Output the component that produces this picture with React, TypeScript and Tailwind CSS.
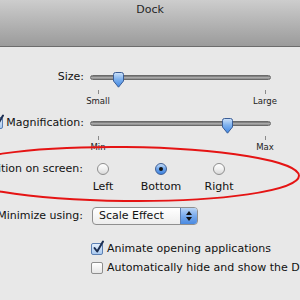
import React from "react";

function Thumb() {
  return (
    <svg width="13" height="16" viewBox="0 0 13 16" className="block">
      <defs>
        <linearGradient id="tg" x1="0" y1="0" x2="0" y2="1">
          <stop offset="0" stopColor="#cfe3fa" />
          <stop offset="0.45" stopColor="#7fb2ee" />
          <stop offset="1" stopColor="#3f86e3" />
        </linearGradient>
      </defs>
      <path d="M1.5 2.5 Q1.5 0.5 3.5 0.5 H9.5 Q11.5 0.5 11.5 2.5 V9 L6.5 15.2 L1.5 9 Z" fill="url(#tg)" stroke="#3b5d96" strokeWidth="1" />
    </svg>
  );
}

function Slider({ thumbLeft }: { thumbLeft: number }) {
  return (
    <div className="relative h-[16px] w-[181px]">
      <div className="absolute left-0 right-0 top-[6px] h-[5px] rounded-full bg-gradient-to-b from-[#6f6f6f] via-[#a9a9a9] to-[#8a8a8a] border border-[#6a6a6a]" />
      <div className="absolute top-[3px]" style={{ left: thumbLeft }}>
        <Thumb />
      </div>
    </div>
  );
}

function Ticks({ a, b }: { a: string; b: string }) {
  return (
    <div className="flex justify-between ml-[86px] w-[191px]">
      <div className="flex w-[24px] flex-col items-center">
        <div className="h-[4px] w-px bg-[#8a8a8a]" />
        <div className="mt-[2px] text-[8.5px] leading-[10px] text-[#222]">{a}</div>
      </div>
      <div className="flex w-[24px] flex-col items-center">
        <div className="h-[4px] w-px bg-[#8a8a8a]" />
        <div className="mt-[2px] text-[8.5px] leading-[10px] text-[#222]">{b}</div>
      </div>
    </div>
  );
}

function Radio({ on, label }: { on?: boolean; label: string }) {
  return (
    <div className="flex w-[40px] flex-col items-center">
      {on ? (
        <div className="flex h-[12px] w-[12px] items-center justify-center rounded-full border border-[#3f5f95] bg-gradient-to-b from-[#c4dcf7] via-[#6da4ea] to-[#3d82df]">
          <div className="h-[4px] w-[4px] rounded-full bg-[#111]" />
        </div>
      ) : (
        <div className="h-[12px] w-[12px] rounded-full border border-[#8e8e8e] bg-gradient-to-b from-[#ffffff] via-[#f0f0f0] to-[#d8d8d8]" />
      )}
      <div className="mt-[7px] whitespace-nowrap leading-[10px]">{label}</div>
    </div>
  );
}

function CheckBox({ on }: { on?: boolean }) {
  return (
    <div
      className={
        "relative h-[12px] w-[12px] shrink-0 rounded-[2px] border " +
        (on
          ? "border-[#5b7fb3] bg-gradient-to-b from-[#e4effc] to-[#a9c9ef]"
          : "border-[#8e8e8e] bg-gradient-to-b from-[#ffffff] to-[#e6e6e6]")
      }
    >
      {on && (
        <svg width="13" height="14" viewBox="0 0 13 14" className="absolute left-[0px] top-[-4px]">
          <path d="M2.5 8 L5.2 11.5 L11 1.5" fill="none" stroke="#1d2f52" strokeWidth="2" strokeLinecap="round" strokeLinejoin="round" />
        </svg>
      )}
    </div>
  );
}

export default function App() {
  return (
    <div className="relative h-[300px] w-[300px] overflow-hidden bg-[#e8e8e8] font-['DejaVu_Sans',sans-serif] text-[11px] text-[#111]">
      <div className="flex h-[47px] justify-center border-b border-[#6c6c6c] bg-gradient-to-b from-[#cdcdcd] to-[#9b9b9b] pt-[3px]">
        <span className="leading-[14px] text-[#262626]">Dock</span>
      </div>

      <div className="mt-[22px] flex items-center">
        <div className="flex w-[84px] justify-end whitespace-nowrap">Size:</div>
        <div className="ml-[6px]">
          <Slider thumbLeft={22} />
        </div>
      </div>
      <div className="mt-[4px]">
        <Ticks a="Small" b="Large" />
      </div>

      <div className="mt-[9px] flex items-center">
        <div className="flex w-[84px] items-center justify-end gap-[3px] whitespace-nowrap">
          <CheckBox on />
          <span>Magnification:</span>
        </div>
        <div className="ml-[6px]">
          <Slider thumbLeft={131} />
        </div>
      </div>
      <div className="mt-[5px]">
        <Ticks a="Min" b="Max" />
      </div>

      <div className="mt-[11px] flex items-start">
        <div className="flex h-[12px] w-[83px] items-center justify-end whitespace-nowrap">Position on screen:</div>
        <div className="flex gap-[18px]">
          <Radio label="Left" />
          <Radio on label="Bottom" />
          <Radio label="Right" />
        </div>
      </div>

      <div className="mt-[15px] flex items-center">
        <div className="flex w-[83px] justify-end whitespace-nowrap">Minimize using:</div>
        <div className="ml-[9px] flex h-[18px] w-[106px] overflow-hidden rounded-[4px] border border-[#8f8f8f] bg-gradient-to-b from-[#ffffff] to-[#ededed]">
          <div className="flex flex-1 items-center pl-[6px]">Scale Effect</div>
          <div className="flex w-[17px] flex-col items-center justify-center gap-[2px] border-l border-[#5d7fb2] bg-gradient-to-b from-[#b9d4f5] via-[#78aaec] to-[#4a8ae1]">
            <svg width="6" height="4" viewBox="0 0 6 4"><path d="M0 4 L3 0 L6 4 Z" fill="#111" /></svg>
            <svg width="6" height="4" viewBox="0 0 6 4"><path d="M0 0 L3 4 L6 0 Z" fill="#111" /></svg>
          </div>
        </div>
      </div>

      <div className="ml-[91px] mt-[18px] flex items-center gap-[4px] whitespace-nowrap">
        <CheckBox on />
        <span className="leading-[12px]">Animate opening applications</span>
      </div>
      <div className="ml-[91px] mt-[7px] flex items-center gap-[4px] whitespace-nowrap">
        <CheckBox />
        <span className="leading-[12px]">Automatically hide and show the Dock</span>
      </div>

      <svg width="300" height="300" className="pointer-events-none absolute left-0 top-0">
        <ellipse cx="125" cy="174" rx="174" ry="27" transform="rotate(0.6 125 174)" fill="none" stroke="#e51414" strokeWidth="2" />
      </svg>
    </div>
  );
}
